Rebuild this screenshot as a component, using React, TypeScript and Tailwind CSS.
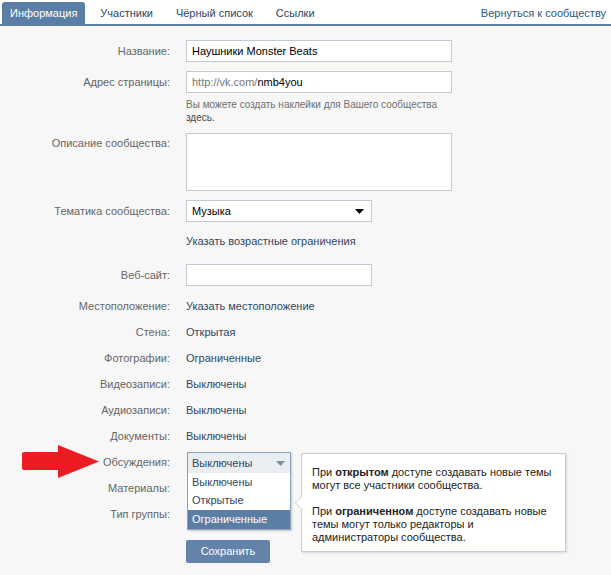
import React from "react";

const font = { fontFamily: '"Liberation Sans", Arial, sans-serif' };

function Label({ children, top }: { children: React.ReactNode; top?: boolean }) {
  return (
    <div className={`w-[170px] shrink-0 text-right text-[#666666] ${top ? "pt-[4px]" : ""}`}>{children}</div>
  );
}

function TextRow({ label, value, children }: { label: string; value?: string; children?: React.ReactNode }) {
  return (
    <div className="flex items-center h-[26px]">
      <Label>{label}</Label>
      <div className="ml-[16px] text-[#2f4762] relative">{value}{children}</div>
    </div>
  );
}

export default function App() {
  return (
    <div className="w-[611px] h-[575px] bg-[#f7f7f7] text-[11px] leading-[13px] relative overflow-hidden" style={font}>
      {/* Tabs */}
      <div className="h-[26px] bg-white border-b-2 border-[#5b7ea5] flex items-end pl-[2px]">
        <div className="h-[22px] px-[8px] flex items-center bg-[#5b7ea5] text-white rounded-t-[3px]">Информация</div>
        <div className="h-[22px] ml-[7px] px-[8px] flex items-center text-[#2a4562]">Участники</div>
        <div className="h-[22px] ml-[7px] px-[8px] flex items-center text-[#2a4562]">Чёрный список</div>
        <div className="h-[22px] ml-[7px] px-[8px] flex items-center text-[#2a4562]">Ссылки</div>
        <div className="h-[22px] ml-auto pr-[5px] flex items-center text-[#2b587a]">Вернуться к сообществу</div>
      </div>

      <div className="pt-[14px] flex flex-col">
        <div className="flex items-center">
          <Label>Название:</Label>
          <div className="ml-[16px] w-[266px] h-[22px] bg-white border border-[#c0cad5] flex items-center px-[5px] text-black">Наушники Monster Beats</div>
        </div>
        <div className="flex items-center mt-[9px]">
          <Label>Адрес страницы:</Label>
          <div className="ml-[16px] w-[266px] h-[22px] bg-white border border-[#c0cad5] flex items-center px-[5px]">
            <span className="text-[#777777]">http://vk.com/</span>
            <span className="text-black">nmb4you</span>
          </div>
        </div>
        <div className="flex mt-[5px]">
          <div className="w-[170px] shrink-0" />
          <div className="ml-[16px] w-[266px] text-[10px] leading-[13px] text-[#6f6f6f]">
            Вы можете создать наклейки для Вашего сообщества<br />
            <span className="text-[#4a4a4a]">здесь.</span>
          </div>
        </div>
        <div className="flex items-start mt-[9px]">
          <Label top>Описание сообщества:</Label>
          <div className="ml-[16px] w-[266px] h-[58px] bg-white border border-[#c0cad5]" />
        </div>
        <div className="flex items-center mt-[9px]">
          <Label>Тематика сообщества:</Label>
          <div className="ml-[16px] w-[186px] h-[22px] bg-white border border-[#c0cad5] flex items-center px-[5px] text-black">
            <span>Музыка</span>
            <svg className="ml-auto mr-[2px]" width="9" height="5" viewBox="0 0 9 5"><path d="M0 0h9L4.5 5z" fill="#000" /></svg>
          </div>
        </div>
        <div className="flex items-center h-[26px] mt-[6px]">
          <div className="w-[170px] shrink-0" />
          <div className="ml-[16px] text-[#2f4762]">Указать возрастные ограничения</div>
        </div>
        <div className="flex items-center mt-[10px]">
          <Label>Веб-сайт:</Label>
          <div className="ml-[16px] w-[186px] h-[22px] bg-white border border-[#c0cad5]" />
        </div>
        <div className="mt-[7px] flex flex-col">
          <TextRow label="Местоположение:" value="Указать местоположение" />
          <TextRow label="Стена:" value="Открытая" />
          <TextRow label="Фотографии:" value="Ограниченные" />
          <TextRow label="Видеозаписи:" value="Выключены" />
          <TextRow label="Аудиозаписи:" value="Выключены" />
          <TextRow label="Документы:" value="Выключены" />
          <div className="flex items-center h-[26px] relative">
            <Label>Обсуждения:</Label>
            <div className="ml-[16px] relative self-stretch flex-1">
              {/* dropdown */}
              <div className="absolute left-[1px] top-[3px] w-[104px] bg-white border border-[#8fa4bb] shadow-[1px_1px_2px_rgba(0,0,0,0.2)] z-10">
                <div className="h-[20px] bg-[#eaeef3] flex items-center px-[4px] text-[#2f4762]">
                  <span>Выключены</span>
                  <svg className="ml-auto mr-[1px]" width="9" height="5" viewBox="0 0 9 5"><path d="M0 0h9L4.5 5z" fill="#7d8fa3" /></svg>
                </div>
                <div className="h-[18px] flex items-center px-[4px] text-[#2f4762]">Выключены</div>
                <div className="h-[19px] flex items-center px-[4px] text-[#2f4762]">Открытые</div>
                <div className="h-[19px] flex items-center px-[4px] bg-[#5b7ea5] text-white">Ограниченные</div>
              </div>
              {/* tooltip */}
              <div className="absolute left-[115px] top-[4px] w-[265px] h-[99px] bg-white border border-[#c5cfd9] shadow-[1px_1px_2px_rgba(0,0,0,0.12)] z-10 pl-[10px] pt-[12px] text-[#222222]">
                <div className="absolute left-[-7px] top-[42px] w-0 h-0 border-y-[7px] border-y-transparent border-r-[7px] border-r-[#c5cfd9]" />
                <div className="absolute left-[-6px] top-[43px] w-0 h-0 border-y-[6px] border-y-transparent border-r-[6px] border-r-white" />
                <div>При <b>открытом</b> доступе создавать новые темы</div>
                <div>могут все участники сообщества.</div>
                <div className="mt-[13px]">При <b>ограниченном</b> доступе создавать новые</div>
                <div>темы могут только редакторы и</div>
                <div>администраторы сообщества.</div>
              </div>
            </div>
          </div>
          <TextRow label="Материалы:" />
          <TextRow label="Тип группы:" />
        </div>
        <div className="flex mt-[13px]">
          <div className="w-[170px] shrink-0" />
          <div className="ml-[16px] w-[84px] h-[23px] bg-[#6383a8] rounded-[2px] text-white flex items-center justify-center">Сохранить</div>
        </div>
      </div>

      {/* red arrow */}
      <svg className="absolute left-[22px] top-[445px]" width="78" height="33" viewBox="0 0 78 33">
        <path d="M2 7 H36 V0 L77 16.5 L36 33 V25 H2 Q0 25 0 23 V9 Q0 7 2 7 Z" fill="#ed1c24" />
      </svg>
    </div>
  );
}
